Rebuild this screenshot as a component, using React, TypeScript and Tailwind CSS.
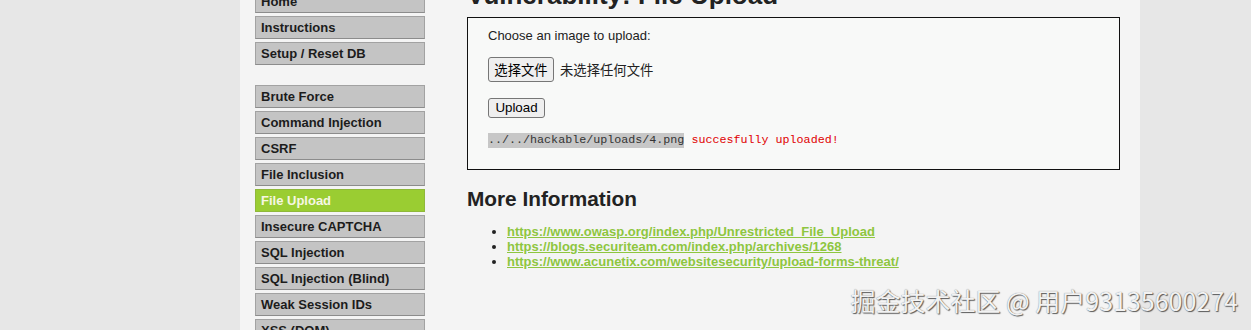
const topMenu = ["Home", "Instructions", "Setup / Reset DB"]

const vulnMenu = [
  "Brute Force",
  "Command Injection",
  "CSRF",
  "File Inclusion",
  "File Upload",
  "Insecure CAPTCHA",
  "SQL Injection",
  "SQL Injection (Blind)",
  "Weak Session IDs",
  "XSS (DOM)",
  "XSS (Reflected)",
]

const links = [
  "https://www.owasp.org/index.php/Unrestricted_File_Upload",
  "https://blogs.securiteam.com/index.php/archives/1268",
  "https://www.acunetix.com/websitesecurity/upload-forms-threat/",
]

const MenuItem = ({ label, active }: { label: string; active?: boolean }) => {
  return (
    <li
      className={
        active
          ? "mb-[3px] h-[23px] w-[170px] border border-[#8fb83a] bg-[#9acd32] px-[5px] text-[13px] font-bold leading-[22px] text-[#f7f7e4]"
          : "mb-[3px] h-[23px] w-[170px] border border-[#a2a2a2] border-b-[#8c8c8c] bg-[#c4c4c4] px-[5px] text-[13px] font-bold leading-[22px] text-[#1c1c1c]"
      }
    >
      {label}
    </li>
  )
}

export default function App() {
  return (
    <div className="relative h-[330px] overflow-hidden bg-[#e7e7e7] font-['Liberation_Sans','Noto_Sans_CJK_SC',sans-serif]">
      <div className="ml-[240px] flex h-full w-[900px] items-start bg-[#f4f4f4] pl-[15px]">
        {/* side menu */}
        <div className="-mt-[10px] w-[170px]">
          <ul className="mb-[20px]">
            {topMenu.map((item) => (
              <MenuItem key={item} label={item} />
            ))}
          </ul>
          <ul>
            {vulnMenu.map((item) => (
              <MenuItem key={item} label={item} active={item === "File Upload"} />
            ))}
          </ul>
        </div>

        {/* main body */}
        <div className="-mt-[20px] ml-[42px] w-[653px]">
          <h1 className="h-[30px] text-[26px] font-bold leading-[30px] text-[#222]">
            Vulnerability: File Upload
          </h1>
          <div className="mt-[7px] border border-[#111] bg-[#f8f9f8] px-[20px] pt-[10px] pb-[21px] text-[13.33px] text-[#222]">
            <p className="text-[13px] leading-[15px]">Choose an image to upload:</p>
            <div className="mt-[14px] flex items-center">
              <span className="flex h-[25px] w-[66px] items-center justify-center rounded-[3px] border border-[#767676] bg-[#efefef] font-['Noto_Sans_CJK_SC',sans-serif] text-[13.33px] text-black">
                选择文件
              </span>
              <span className="ml-[6px] font-['Noto_Sans_CJK_SC',sans-serif] text-[13.33px] text-[#222]">
                未选择任何文件
              </span>
            </div>
            <div className="mt-[16px] flex">
              <span className="flex h-[20px] w-[57px] items-center justify-center rounded-[3px] border border-[#767676] bg-[#efefef] text-[13.33px] text-black">
                Upload
              </span>
            </div>
            <pre className="mt-[15px] flex h-[15px] font-['Liberation_Mono',monospace] text-[11.7px] leading-[15px]">
              <span className="inline-block h-[15px] bg-[#c7c7c7] text-[#333]">../../hackable/uploads/4.png</span>
              <span className="inline-block h-[15px] whitespace-pre text-[#e00000]"> succesfully uploaded!</span>
            </pre>
          </div>

          <h2 className="mt-[17px] text-[20.8px] font-bold leading-[24px] text-[#222]">
            More Information
          </h2>
          <ul className="mt-[13px] list-disc pl-[40px] text-[13px] leading-[15px] text-[#222]">
            {links.map((link) => (
              <li key={link}>
                <a href="#" className="font-bold text-[#8ec63f] underline">
                  {link}
                </a>
              </li>
            ))}
          </ul>
        </div>
      </div>

      {/* watermark */}
      <div className="absolute top-[285px] right-[13px] font-['Noto_Sans_CJK_SC',sans-serif] text-[25px] leading-[30px] text-[#f2f2f2] [text-shadow:1px_1px_1px_#5a5a5a,0_0_1px_#777]">
        掘金技术社区 @ 用户93135600274
      </div>
    </div>
  )
}
